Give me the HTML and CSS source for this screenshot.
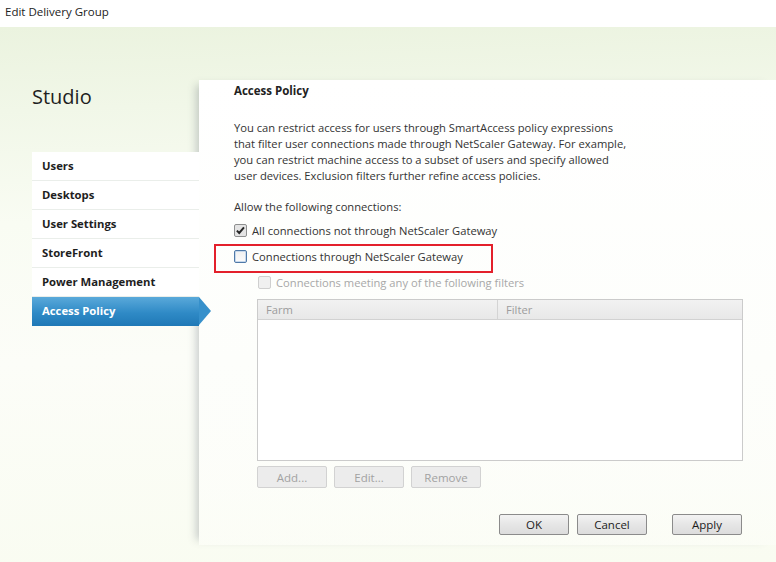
FILE: index.html
```html
<!DOCTYPE html>
<html lang="en">
  <head>
    <meta charset="UTF-8" />
    <title>Edit Delivery Group</title>
    <link rel="stylesheet" href="styles.css">
  </head>
  <body>
    <div class="window">
      <div class="titlebar">Edit Delivery Group</div>

      <div class="dialog">
        <!-- Wizard steps -->
        <div class="sidebar">
          <h1 class="studio">Studio</h1>
          <ul class="steps">
            <li class="step">Users</li>
            <li class="step">Desktops</li>
            <li class="step">User Settings</li>
            <li class="step">StoreFront</li>
            <li class="step">Power Management</li>
            <li class="step active">Access Policy</li>
          </ul>
        </div>

        <!-- Page content -->
        <div class="content">
          <h2 class="page-title">Access Policy</h2>
          <p class="intro">
            You can restrict access for users through SmartAccess policy expressions<br>
            that filter user connections made through NetScaler Gateway. For example,<br>
            you can restrict machine access to a subset of users and specify allowed<br>
            user devices. Exclusion filters further refine access policies.
          </p>

          <div class="label">Allow the following connections:</div>

          <label class="check-row">
            <span class="checkbox checked">
              <svg viewBox="0 0 13 13" width="11" height="11"><path d="M2.2 6.6 L5 9.4 L10.6 2.8" fill="none" stroke="#262626" stroke-width="2.3"/></svg>
            </span>
            All connections not through NetScaler Gateway
          </label>
          <label class="check-row highlighted">
            <span class="checkbox focus"></span>
            Connections through NetScaler Gateway
          </label>
          <label class="check-row sub disabled">
            <span class="checkbox"></span>
            Connections meeting any of the following filters
          </label>

          <div class="filter-table">
            <div class="table-head">
              <div class="col farm">Farm</div>
              <div class="col">Filter</div>
            </div>
          </div>

          <div class="table-buttons">
            <button class="btn disabled">Add...</button>
            <button class="btn disabled">Edit...</button>
            <button class="btn disabled">Remove</button>
          </div>

          <div class="dialog-buttons">
            <button class="btn">OK</button>
            <button class="btn">Cancel</button>
            <button class="btn apply">Apply</button>
          </div>
        </div>
      </div>
    </div>
  </body>
</html>
```

FILE: styles.css
```css
* {
  margin: 0;
  padding: 0;
  box-sizing: border-box;
}

body {
  width: 776px;
  height: 562px;
  overflow: hidden;
  font-family: "Open Sans", "Noto Sans", sans-serif;
  font-size: 11.2px;
  color: #333;
  background: #fff;
}

.window {
  display: flex;
  flex-direction: column;
  height: 562px;
}

/* Title bar */
.titlebar {
  height: 27px;
  padding-left: 5px;
  line-height: 24px;
  font-size: 11.5px;
  color: #222;
  background: #fff;
}

/* Dialog body */
.dialog {
  flex: 1;
  display: flex;
  background: linear-gradient(178deg, #ebf3df 0%, #f1f7e8 15%, #f9fcf3 35%, #fcfdf8 60%, #f9fcf1 100%);
}

.sidebar {
  width: 199px;
  flex-shrink: 0;
  padding: 58px 0 0 32px;
}

.studio {
  font-size: 20px;
  font-weight: 500;
  line-height: 24px;
  color: #1e1e1e;
  margin-bottom: 43px;
}

.steps {
  list-style: none;
}

.step {
  position: relative;
  height: 29px;
  line-height: 28px;
  padding-left: 10px;
  font-size: 11.3px;
  font-weight: bold;
  color: #1e1e1e;
  border-bottom: 1px solid #eaeeea;
  background: #fff;
}

.step.active {
  color: #fff;
  border-bottom: none;
  background: linear-gradient(#5aa9da, #2f8ac6 55%, #1f78b6);
}

.step.active::after {
  content: "";
  position: absolute;
  top: 0;
  right: -12px;
  border-top: 14.5px solid transparent;
  border-bottom: 14.5px solid transparent;
  border-left: 12px solid #3690cb;
}

.content {
  flex: 1;
  margin: 53px 0 17px;
  padding: 3px 34px 0 35px;
  background: linear-gradient(#ffffff 0%, #fdfefb 60%, rgba(255, 255, 255, 0.3) 100%);
  box-shadow: -8px 0 8px -5px rgba(90, 100, 110, 0.3);
}

.page-title {
  font-size: 11.5px;
  font-weight: bold;
  line-height: 16px;
  color: #222;
  margin-bottom: 21px;
}

.intro {
  line-height: 16px;
  white-space: nowrap;
  margin-bottom: 15px;
}

.label {
  line-height: 16px;
  margin-bottom: 2px;
}

/* Checkboxes */
.check-row {
  position: relative;
  display: flex;
  align-items: center;
  gap: 5px;
  height: 26px;
  white-space: nowrap;
}

.check-row.sub {
  padding-left: 24px;
}

.check-row.disabled {
  color: #a8a8a8;
}

.highlighted::before {
  content: "";
  position: absolute;
  left: -20px;
  top: 1px;
  width: 275px;
  height: 25px;
  border: 2px solid #e3202b;
}

.checkbox {
  width: 13px;
  height: 13px;
  border: 1px solid #8e8f8f;
  border-radius: 2px;
  background: linear-gradient(#f0f0f0, #fbfbfb);
  display: flex;
  align-items: center;
  justify-content: center;
}

.checkbox.checked {
  background: #e4e4e4;
}

.checkbox.focus {
  border-color: #4f79a8;
  box-shadow: inset 0 0 0 1px #c8d9ec;
}

.disabled .checkbox {
  border-color: #cfcfcf;
  background: #f0f0f0;
}

/* Filter list */
.filter-table {
  height: 162px;
  margin: 4px -1px 0 23px;
  border: 1px solid #cbcbcb;
  background: #fff;
}

.table-head {
  display: flex;
  height: 20px;
  line-height: 19px;
  color: #9c9c9c;
  background: linear-gradient(#f2f2f2, #e8e8e8);
  border-bottom: 1px solid #d2d2d2;
}

.col {
  padding-left: 8px;
}

.col.farm {
  width: 240px;
  border-right: 1px solid #d4d4d4;
}

/* Buttons */
.btn {
  width: 70px;
  height: 21px;
  font-family: inherit;
  font-size: 11.5px;
  color: #1c1c1c;
  border: 1px solid #8b8b8b;
  border-radius: 2px;
  background: linear-gradient(#f3f3f3, #e6e6e6 50%, #dcdcdc);
}

.btn.disabled {
  height: 22px;
  color: #a2a2a2;
  border-color: #d2d2d2;
  background: #ececec;
}

.table-buttons {
  display: flex;
  gap: 7px;
  margin: 5px 0 0 23px;
}

.dialog-buttons {
  display: flex;
  justify-content: flex-end;
  gap: 8px;
  margin-top: 26px;
}

.dialog-buttons .apply {
  margin-left: 17px;
}
```
